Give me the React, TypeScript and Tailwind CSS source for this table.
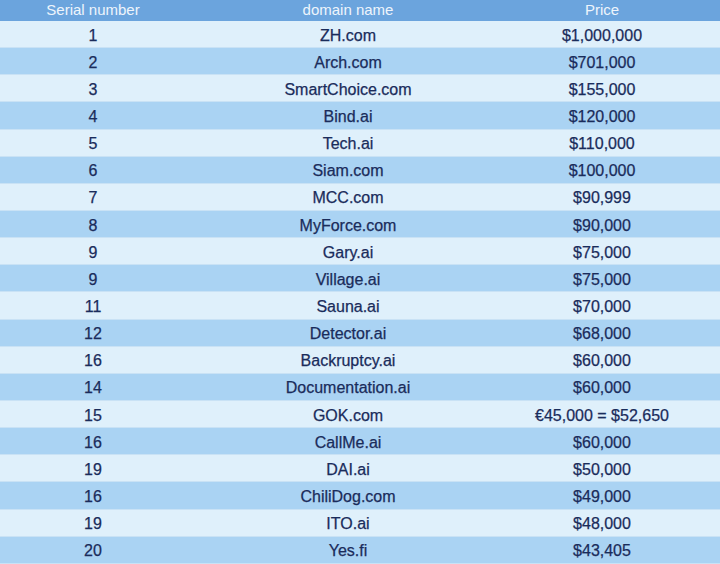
const rows: [string, string, string][] = [
  ['1', 'ZH.com', '$1,000,000'],
  ['2', 'Arch.com', '$701,000'],
  ['3', 'SmartChoice.com', '$155,000'],
  ['4', 'Bind.ai', '$120,000'],
  ['5', 'Tech.ai', '$110,000'],
  ['6', 'Siam.com', '$100,000'],
  ['7', 'MCC.com', '$90,999'],
  ['8', 'MyForce.com', '$90,000'],
  ['9', 'Gary.ai', '$75,000'],
  ['9', 'Village.ai', '$75,000'],
  ['11', 'Sauna.ai', '$70,000'],
  ['12', 'Detector.ai', '$68,000'],
  ['16', 'Backruptcy.ai', '$60,000'],
  ['14', 'Documentation.ai', '$60,000'],
  ['15', 'GOK.com', '€45,000 = $52,650'],
  ['16', 'CallMe.ai', '$60,000'],
  ['19', 'DAI.ai', '$50,000'],
  ['16', 'ChiliDog.com', '$49,000'],
  ['19', 'ITO.ai', '$48,000'],
  ['20', 'Yes.fi', '$43,405'],
]

export default function App() {
  return (
    <div className="w-[720px] h-[564px] overflow-hidden bg-[#dfeffa] font-['Liberation_Sans',Arial,sans-serif]">
      {/* Header */}
      <div className="flex h-[21px] pb-[3px] bg-[#6ba4dd] text-[15px] font-medium text-[#eef5fc] leading-none">
        <div className="w-[186px] flex items-center justify-center">Serial number</div>
        <div className="w-[324px] flex items-center justify-center">domain name</div>
        <div className="flex-1 flex items-center justify-center pr-[26px]">Price</div>
      </div>

      {/* Rows */}
      {rows.map(([n, domain, price], i) => (
        <div
          key={i}
          className={`flex h-[27.15px] pt-[3px] text-[16px] leading-none text-[#1a2c5b] border-b border-[#c9e2f5] [-webkit-text-stroke:0.25px_#1a2c5b] ${
            i % 2 === 0 ? 'bg-[#dff0fb]' : 'bg-[#aad3f3]'
          }`}
        >
          <div className="w-[186px] flex items-center justify-center">{n}</div>
          <div className="w-[324px] flex items-center justify-center">{domain}</div>
          <div className="flex-1 flex items-center justify-center pr-[26px]">{price}</div>
        </div>
      ))}
    </div>
  )
}
